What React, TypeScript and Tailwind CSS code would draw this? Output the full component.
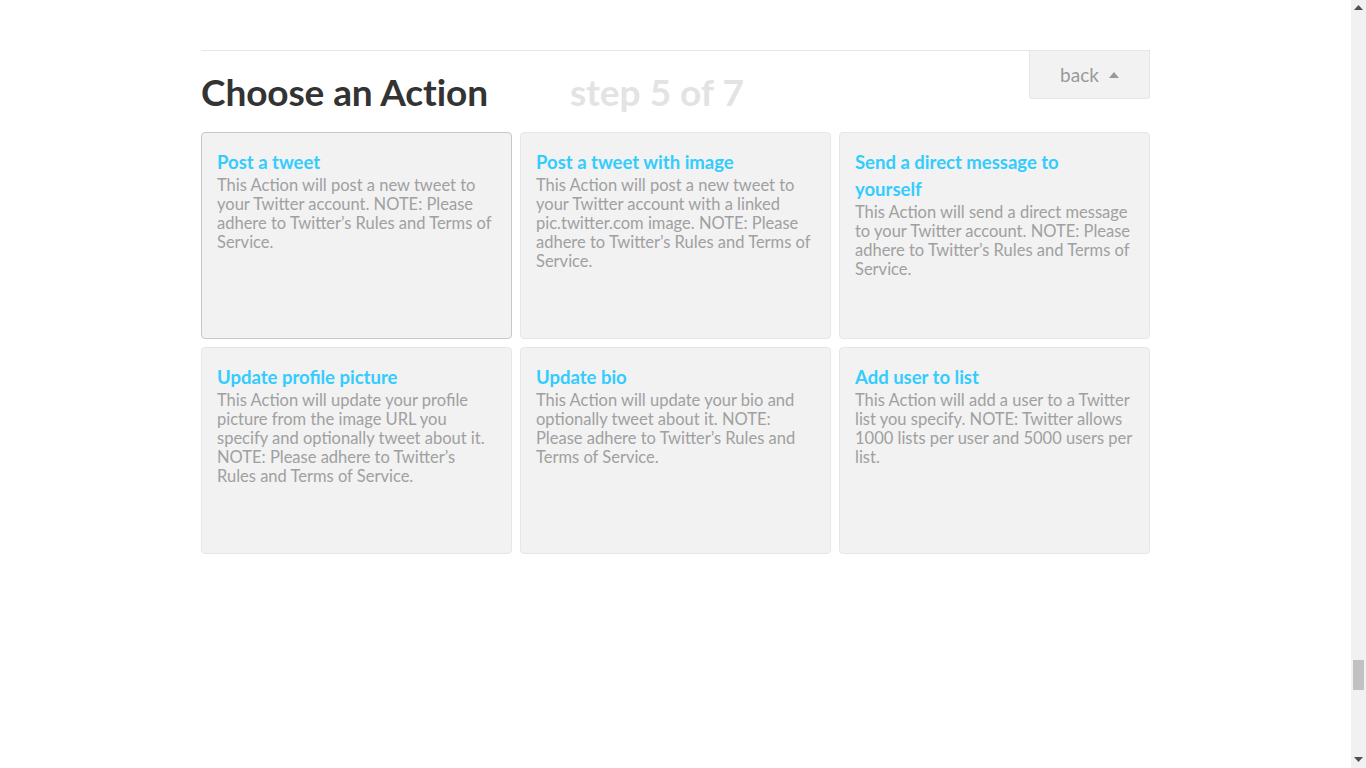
import React from "react";

const cards = [
  {
    title: "Post a tweet",
    desc: "This Action will post a new tweet to your Twitter account. NOTE: Please adhere to Twitter\u2019s Rules and Terms of Service.",
    active: true,
  },
  {
    title: "Post a tweet with image",
    desc: "This Action will post a new tweet to your Twitter account with a linked pic.twitter.com image. NOTE: Please adhere to Twitter\u2019s Rules and Terms of Service.",
  },
  {
    title: "Send a direct message to yourself",
    desc: "This Action will send a direct message to your Twitter account. NOTE: Please adhere to Twitter\u2019s Rules and Terms of Service.",
  },
  {
    title: "Update profile picture",
    desc: "This Action will update your profile picture from the image URL you specify and optionally tweet about it. NOTE: Please adhere to Twitter\u2019s Rules and Terms of Service.",
  },
  {
    title: "Update bio",
    desc: "This Action will update your bio and optionally tweet about it. NOTE: Please adhere to Twitter\u2019s Rules and Terms of Service.",
  },
  {
    title: "Add user to list",
    desc: "This Action will add a user to a Twitter list you specify. NOTE: Twitter allows 1000 lists per user and 5000 users per list.",
  },
];

export default function App() {
  return (
    <div
      className="flex h-[768px] w-[1366px] overflow-hidden bg-white"
      style={{ fontFamily: "Lato, 'Noto Sans', sans-serif" }}
    >
      <div className="flex-1 pt-[50px]">
        <div className="w-[949px] ml-[201px]">
          <div className="relative border-t border-[#e6e6e6]">
            <div className="flex h-[81px] pt-[22px]">
              <h1 className="text-[37px] font-bold text-[#333] leading-none tracking-[-0.1px]">
                Choose an Action
              </h1>
              <span className="ml-[82px] text-[37px] font-bold text-[#e3e3e3] leading-none">
                step 5 of 7
              </span>
            </div>
            <button className="absolute right-0 top-0 flex h-[48px] w-[121px] items-center justify-center gap-[10px] rounded-b-[3px] border border-t-0 border-[#e6e6e6] bg-[#f2f2f2] text-[19px] text-[#999]">
              <span className="leading-none">back</span>
              <svg width="10" height="6" viewBox="0 0 10 6">
                <path d="M0 6 L5 0 L10 6 Z" fill="#999" />
              </svg>
            </button>
          </div>
          <div className="grid grid-cols-3 gap-x-[8px] gap-y-[8px]">
            {cards.map((c) => (
              <div
                key={c.title}
                className={`h-[207px] rounded-[4px] border bg-[#f2f2f2] px-[15px] pt-[16px] ${
                  c.active ? "border-[#c8c8c8]" : "border-[#e6e6e6]"
                }`}
              >
                <div className="text-[18.5px] font-bold leading-[27px] text-[#33ccff] pr-[40px]">
                  {c.title}
                </div>
                <div className="text-[16.5px] leading-[19px] text-[#a0a0a0]">
                  {c.desc}
                </div>
              </div>
            ))}
          </div>
        </div>
      </div>
      <div className="relative h-[768px] w-[15px] bg-[#f1f1f1]">
        <svg className="absolute left-[3px] top-[5px]" width="9" height="5" viewBox="0 0 9 5">
          <path d="M0 5 L4.5 0 L9 5 Z" fill="#505050" />
        </svg>
        <div className="absolute left-[2px] top-[660px] h-[30px] w-[11px] bg-[#c1c1c1]" />
        <svg className="absolute left-[3px] top-[757px]" width="9" height="5" viewBox="0 0 9 5">
          <path d="M0 0 L4.5 5 L9 0 Z" fill="#505050" />
        </svg>
      </div>
    </div>
  );
}
